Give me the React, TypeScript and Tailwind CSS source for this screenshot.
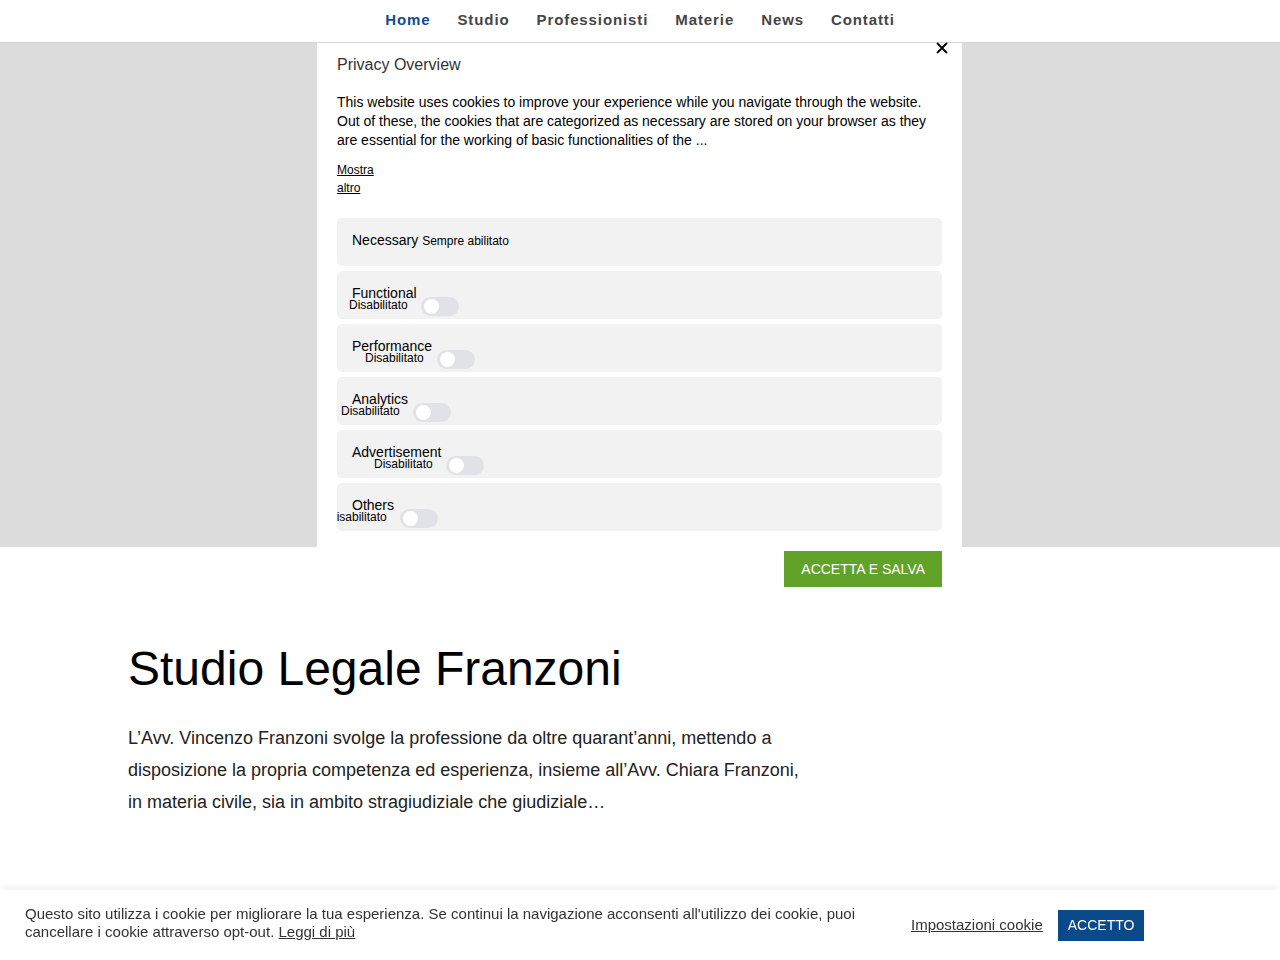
import { useState } from "react";

const font = { fontFamily: '"Liberation Sans", Arial, sans-serif' };

const navItems = ["Home", "Studio", "Professionisti", "Materie", "News", "Contatti"];

// offset of the "Disabilitato" label + switch group inside each category row
const categories = [
  { name: "Functional", shift: "ml-[12px]" },
  { name: "Performance", shift: "ml-[28px]" },
  { name: "Analytics", shift: "ml-[4px]" },
  { name: "Advertisement", shift: "ml-[37px]" },
  { name: "Others", shift: "ml-[-9px]" },
];

function Toggle() {
  return (
    <span className="relative inline-block w-[38px] h-[19px] rounded-full bg-[#e1e1e8]">
      <span className="absolute left-[3px] top-[2px] w-[15px] h-[15px] rounded-full bg-white" />
    </span>
  );
}

function PrivacyModal() {
  return (
    <div className="absolute top-[43px] left-[317px] w-[645px] bg-white px-5 pb-5">
      <button className="absolute right-[14px] top-[-1px]">
        <svg width="12" height="12" viewBox="0 0 12 12">
          <path d="M1 1 L11 11 M11 1 L1 11" stroke="#000" strokeWidth="1.8" />
        </svg>
      </button>
      <h3 className="pt-[13px] text-[16px] leading-[18px] text-[#333]">Privacy Overview</h3>
      <p className="mt-[19px] text-[14px] leading-[19px] text-black w-[592px]">
        This website uses cookies to improve your experience while you navigate through the website. Out of these, the cookies that are categorized as necessary are stored on your browser as they are essential for the working of basic functionalities of the ...
      </p>
      <a className="block mt-[11px] w-[40px] text-[12px] leading-[18px] text-black underline">Mostra altro</a>

      <div className="mt-[21px] flex flex-col gap-[5px]">
        <div className="h-[48px] rounded-[5px] bg-[#f2f2f2] flex items-center px-[15px] pb-[3px] text-[14px] text-black">
          Necessary <span className="ml-1 text-[12px]">Sempre abilitato</span>
        </div>
        {categories.map((c) => (
          <div key={c.name} className="h-[48px] rounded-[5px] bg-[#f2f2f2] overflow-hidden">
            <div className="pl-[15px] pt-[15px] text-[14px] leading-[15px] text-black">{c.name}</div>
            <div className={`flex items-center gap-[13px] mt-[-4px] ${c.shift}`}>
              <span className="text-[12px] leading-[12px] text-black mt-[-3px]">Disabilitato</span>
              <Toggle />
            </div>
          </div>
        ))}
      </div>

      <div className="mt-[20px] flex justify-end">
        <button className="h-[36px] px-[17px] bg-[#61a229] text-white text-[14px] uppercase">Accetta e salva</button>
      </div>
    </div>
  );
}

function CookieBar() {
  return (
    <div className="fixed bottom-0 left-0 right-0 h-[70px] bg-white shadow-[0_-1px_10px_rgba(0,0,0,0.08)] flex items-center pl-[25px] pb-[4px]">
      <p className="w-[840px] text-[15px] leading-[18px] text-[#333]">
        Questo sito utilizza i cookie per migliorare la tua esperienza. Se continui la navigazione acconsenti all'utilizzo dei cookie, puoi cancellare i cookie attraverso opt-out. <a className="underline">Leggi di più</a>
      </p>
      <a className="ml-[46px] mt-[4px] text-[15px] text-[#333] underline whitespace-nowrap">Impostazioni cookie</a>
      <button className="ml-[15px] mt-[4px] h-[31px] px-[10px] bg-[#0b4a8a] text-white text-[14px]">ACCETTO</button>
    </div>
  );
}

export default function App() {
  const [active] = useState("Home");

  return (
    <div className="relative min-h-[960px] bg-white" style={font}>
      <header className="h-[43px] pb-[2px] border-b border-[#d6d6d6] flex items-center justify-center gap-[27px]">
        {navItems.map((n) => (
          <a
            key={n}
            className={`text-[15px] font-bold tracking-[0.06em] ${n === active ? "text-[#104c8c]" : "text-[#454545]"}`}
          >
            {n}
          </a>
        ))}
      </header>

      <div className="h-[504px] bg-[#dcdcdc]" />

      <section className="pl-[128px] pt-[94px]">
        <h1 className="text-[48px] leading-[56px] text-black">Studio Legale Franzoni</h1>
        <p className="mt-[25px] w-[676px] text-[18px] leading-[32px] text-[#222]">
          L’Avv. Vincenzo Franzoni svolge la professione da oltre quarant’anni, mettendo a disposizione la propria competenza ed esperienza, insieme all’Avv. Chiara Franzoni, in materia civile, sia in ambito stragiudiziale che giudiziale…
        </p>
      </section>

      <PrivacyModal />
      <CookieBar />
    </div>
  );
}
